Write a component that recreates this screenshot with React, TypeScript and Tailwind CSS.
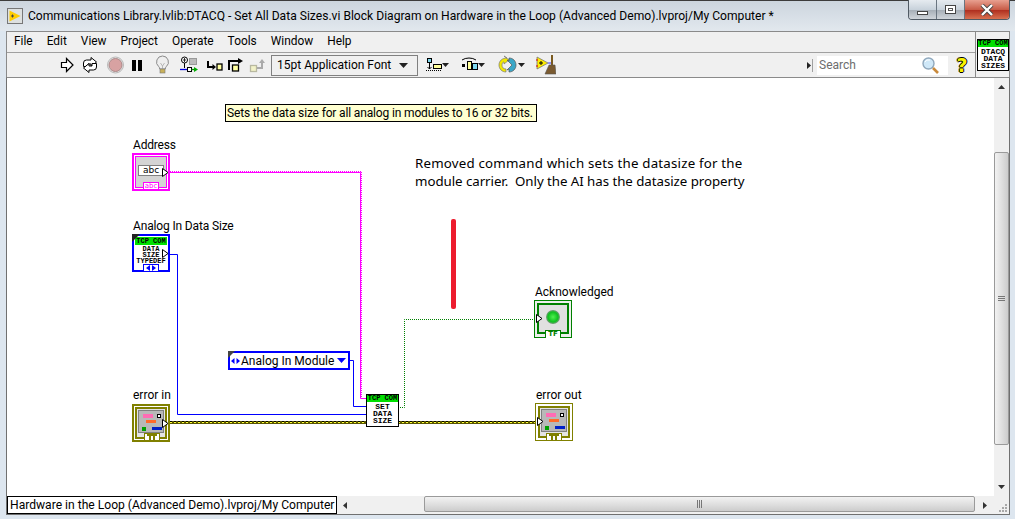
const FONT = "font-['Roboto','Noto_Sans',sans-serif]";
const TINY = "font-['Liberation_Mono',monospace] font-bold text-black";

function Icon({ w, children }: { w: number; children: React.ReactNode }) {
  return (
    <svg width={w} height={20} viewBox={`0 0 ${w} 20`} className="shrink-0">
      {children}
    </svg>
  );
}

function Caret({ x }: { x: number }) {
  return <path d={`M${x} 8h7l-3.500 4z`} fill="#222" />;
}

function Toolbar() {
  return (
    <div className="flex h-[24px] items-center">
      <div className="w-[53px] shrink-0" />
      <Icon w={14}>
        <path d="M1.500 7.500h5v-4l6.500 6.500-6.500 6.500v-4h-5z" fill="#fff" stroke="#000" strokeWidth="1.200" />
      </Icon>
      <div className="w-[8px] shrink-0" />
      <Icon w={16}>
        <path d="M1.500 11.500V8q0-3 3-3H9V2.500l5.500 4.500L9 11.500V9H6v2.500z" fill="#fff" stroke="#000" />
        <path d="M14.500 8.500V12q0 3-3 3H7v2.500L1.500 13 7 8.500V11h3V8.500z" fill="#fff" stroke="#000" />
      </Icon>
      <div className="w-[9px] shrink-0" />
      <Icon w={17}>
        <circle cx="8.500" cy="10" r="8" fill="#e8e8e8" stroke="#b8b8b8" />
        <circle cx="8.500" cy="10" r="6.500" fill="#d8a2a2" stroke="#a88" />
      </Icon>
      <div className="w-[8px] shrink-0" />
      <Icon w={11}>
        <rect x="0" y="5" width="4" height="11" fill="#000" />
        <rect x="6" y="5" width="4" height="11" fill="#000" />
      </Icon>
      <div className="w-[13px] shrink-0" />
      <Icon w={13}>
        <path d="M6.500 1a6 6 0 0 0-3.800 10.600c.8.800 1 1.400 1 2.400h5.600c0-1 .2-1.600 1-2.400A6 6 0 0 0 6.500 1z" fill="#eee" stroke="#8a8a8a" />
        <path d="M4.500 8l2 3 2-3M6.500 11v3" fill="none" stroke="#aaa" strokeWidth=".8" />
        <rect x="4" y="14" width="5" height="4" fill="#c9b15a" stroke="#777" strokeWidth=".6" />
      </Icon>
      <div className="w-[11px] shrink-0" />
      <Icon w={18}>
        <circle cx="4.500" cy="5" r="3" fill="#fff" stroke="#000" />
        <path d="M4.500 3v4M3 5h3" stroke="#000" strokeWidth=".8" />
        <path d="M4.500 8v5" stroke="#000" />
        <rect x="9.500" y="3.500" width="7" height="6" fill="#bbb" stroke="#999" />
        <path d="M0 14.500h7" stroke="#00d" strokeWidth="1.300" />
        <rect x="7.500" y="12.500" width="4" height="4" fill="#fff" stroke="#000" />
        <path d="M11.500 14.500h3" stroke="#080" strokeWidth="1.300" />
        <path d="M14 12l4 2.500-4 2.500z" fill="#0a0" />
      </Icon>
      <div className="w-[9px] shrink-0" />
      <Icon w={16}>
        <path d="M1 6v6h6" fill="none" stroke="#000" strokeWidth="2" />
        <path d="M5.500 9l3.500 3-3.500 3z" fill="#000" />
        <rect x="10" y="9" width="5" height="6" fill="#ffffa0" stroke="#000" strokeWidth="1.300" />
      </Icon>
      <div className="w-[5px] shrink-0" />
      <Icon w={16}>
        <path d="M1 15V6h9" fill="none" stroke="#000" strokeWidth="2" />
        <path d="M10 3l5 3-5 3z" fill="#000" />
        <rect x="4.500" y="10" width="6" height="6" fill="#ffffa0" stroke="#000" strokeWidth="1.300" />
      </Icon>
      <div className="w-[5px] shrink-0" />
      <Icon w={17}>
        <rect x="1.500" y="10.500" width="6" height="6" fill="#f2f2c8" stroke="#b8b8a0" strokeWidth="1.300" />
        <path d="M8 13h5V7" fill="none" stroke="#aaa" strokeWidth="2" />
        <path d="M10 8l3-4 3 4z" fill="#aaa" />
      </Icon>
      <div className="w-[5px] shrink-0" />
      <div className="flex h-[21px] w-[147px] shrink-0 items-center justify-between border border-[#808080] bg-[#f0f0f0] pl-[5px] pr-[9px] text-[12px] whitespace-nowrap text-black">
        <span>15pt Application Font</span>
        <svg width="9" height="5" viewBox="0 0 9 5"><path d="M0 0h9L4.500 5z" fill="#222" /></svg>
      </div>
      <div className="w-[8px] shrink-0" />
      <Icon w={23}>
        <rect x="1.500" y="3.500" width="4" height="4" fill="#7fd8ee" stroke="#000" />
        <path d="M3.500 8v6M1.500 12l2 2 2-2" fill="none" stroke="#000" />
        <path d="M0 15.500h15" stroke="#000" strokeDasharray="1 1" />
        <rect x="7.500" y="9.500" width="8" height="4" fill="#ffff9c" stroke="#000" />
        <Caret x={16} />
      </Icon>
      <div className="w-[12px] shrink-0" />
      <Icon w={24}>
        <path d="M1 5q3-2 7-2t7 2" fill="none" stroke="#000" />
        <rect x="1" y="9" width="3" height="3" fill="#000" />
        <rect x="6.500" y="6.500" width="4" height="8" fill="#ffff9c" stroke="#000" />
        <rect x="11.500" y="8.500" width="5" height="6" fill="#7fd8ee" stroke="#000" />
        <Caret x={17} />
      </Icon>
      <div className="w-[13px] shrink-0" />
      <Icon w={27}>
        <path d="M9 3C4 3 1 6 1 10s3 7 7 7v-3c-3 0-4-2-4-4s1-3 2-3v2l5-4-5-4z" fill="#f2e800" stroke="#777" strokeWidth=".7" />
        <path d="M11 3c4 0 7 3 7 7s-3 7-7 7v-3l-2 1 5-5-5-5 2 1z" fill="#3aa7c8" stroke="#555" strokeWidth=".7" />
        <Caret x={20} />
      </Icon>
      <div className="w-[11px] shrink-0" />
      <Icon w={20}>
        <path d="M1 2l11 6-11 6z" fill="#ffee00" stroke="#777" strokeWidth=".8" />
        <path d="M3 8h4M5 6v4" stroke="#000" />
        <path d="M0 5h2M0 11h2" stroke="#d00" />
        <path d="M12 8h4" stroke="#33f" />
        <path d="M16 0v10" stroke="#7a5a20" strokeWidth="2" />
        <path d="M9 19l4-9h6l1 9z" fill="#7a5a30" stroke="#555" strokeWidth=".6" />
      </Icon>
      <div className="flex-1" />
      <svg width="4" height="7" viewBox="0 0 4 7" className="mr-[1px] shrink-0"><path d="M0 0l4 3.500L0 7z" fill="#222" /></svg>
      <div className="mr-[4px] h-[13px] w-px shrink-0 bg-[#a0a0a0]" />
      <div className="flex h-[19px] w-[131px] shrink-0 items-center justify-between bg-white pl-[2px] pr-[8px] text-[12px] text-[#6d6d6d]">
        <span>Search</span>
        <svg width="18" height="17" viewBox="0 0 18 17">
          <circle cx="6.500" cy="6.500" r="5.500" fill="#cfe8f8" stroke="#90a8bc" strokeWidth="1.400" />
          <path d="M3 5q1-3 5-2" stroke="#fff" fill="none" />
          <path d="M11 11l5 5" stroke="#c98a3c" strokeWidth="2.600" />
        </svg>
      </div>
      <div className="w-[5px] shrink-0" />
      <span className="w-[18px] shrink-0 text-center font-['DejaVu_Sans',sans-serif] text-[19px] font-black leading-[20px] text-[#f7f300] [text-shadow:1px_0_0_#000,-1px_0_0_#000,0_1px_0_#000,0_-1px_0_#000]">?</span>
      <div className="w-[4px] shrink-0" />
    </div>
  );
}

function TinyLines({ lines, cls }: { lines: string[]; cls: string }) {
  return (
    <div className={`flex flex-col items-center ${TINY} ${cls}`}>
      {lines.map((l) => (
        <span key={l}>{l}</span>
      ))}
    </div>
  );
}

function Arrow({ left = false }: { left?: boolean }) {
  return (
    <svg width="7" height="9" viewBox="0 0 7 9" className={left ? "absolute left-[1px] top-[13px]" : "absolute right-[-1px] top-[13px]"}>
      <path d="M.5.5L6 4.500.5 8.500z" fill="#fff" stroke="#000" />
    </svg>
  );
}

function ErrorTerm({ cls, out = false }: { cls: string; out?: boolean }) {
  return (
    <div className={`absolute h-[38px] w-[38px] bg-white ${out ? "border border-[#808000] p-[2px]" : "border-2 border-[#808000] p-px"} ${cls}`}>
      <div className="relative h-full w-full border-2 border-[#808000] bg-[#e4e4e4] p-[1px]">
        <div className="relative h-[23px] w-full border border-[#808080] bg-[#b8b8b8]">
          <div className="absolute left-[4px] top-[3px] h-[4px] w-[10px] bg-[#ff6cb4]" />
          <div className="absolute left-[18px] top-[3px] h-[4px] w-[4px] border border-black bg-white" />
          <div className="absolute left-[7px] top-[9px] h-[3px] w-[10px] bg-[#ff6a2a]" />
          <div className="absolute left-[3px] top-[16px] h-[4px] w-[4px] bg-[#00a000]" />
          <div className="absolute left-[13px] top-[16px] h-[3px] w-[10px] bg-[#0020c8]" />
        </div>
      </div>
      <div className="absolute bottom-[-1px] left-[10px] flex h-[8px] w-[16px] items-center justify-center border border-[#808000] bg-white">
        <svg width="12" height="6" viewBox="0 0 12 6"><path d="M1 0h10v2H9v4H7V2H5v4H3V2H1z" fill="#808000" /></svg>
      </div>
      <Arrow left={out} />
    </div>
  );
}

function Label({ cls, children }: { cls: string; children: React.ReactNode }) {
  return <div className={`absolute whitespace-nowrap text-[12px] leading-[16px] text-black ${cls}`}>{children}</div>;
}

function Wires() {
  return (
    <svg width="987" height="420" viewBox="0 0 987 420" className="absolute left-0 top-0">
      <g transform="translate(-7 -78)" fill="none">
        <path d="M170 172.500H360.500V398.500H366" stroke="#ff00ff" />
        <path d="M170 171.500H361.500V398" stroke="#ff00ff" strokeDasharray="1 1" />
        <path d="M170 254.500H177.500V414.500H366" stroke="#0000ff" />
        <path d="M350 360.500H353.500V406.500H366" stroke="#0000ff" />
        <path d="M398 407.500H404.500V319.500H536" stroke="#008000" strokeDasharray="1 1" />
        <path d="M170 422.500H366M398 422.500H536" stroke="#5a5600" strokeWidth="3" />
        <path d="M170 422.500H366M398 422.500H536" stroke="#ffff30" strokeDasharray="2 2" />
        <path d="M170 421.500H366M398 421.500H536" stroke="#000" strokeDasharray="2 2" />
      </g>
    </svg>
  );
}

function Canvas() {
  return (
    <div className={`relative flex-1 bg-white ${FONT}`}>
      <Wires />
      <div className="absolute left-[218px] top-[26px] h-[18px] w-[312px] whitespace-nowrap border border-black bg-[#ffffd0] pl-[1px] text-[12px] leading-[16px] tracking-[-.15px] text-black">
        Sets the data size for all analog in modules to 16 or 32 bits.
      </div>
      <div className="absolute left-[408px] top-[76px] w-[350px] font-['Noto_Sans',sans-serif] text-[13.300px] leading-[18px] text-black">
        <div className="whitespace-nowrap tracking-[.2px]">Removed command which sets the datasize for the</div>
        <div className="whitespace-nowrap tracking-[-.05px]">module carrier.&nbsp; Only the AI has the datasize property</div>
      </div>
      <div className="absolute left-[444px] top-[141px] h-[90px] w-[5px] rounded-[2px] bg-[#ed1c2e]" />

      <Label cls="left-[126px] top-[59px] tracking-[-.2px]">Address</Label>
      <div className="absolute left-[125px] top-[75px] h-[38px] w-[38px] border-2 border-[#ff00ff] bg-white p-px">
        <div className="h-full w-full border border-[#ff00ff] bg-[#d4d4d4] pl-[2px] pt-[8px]">
          <div className="h-[11px] w-[26px] border border-[#808080] bg-white text-center font-['DejaVu_Sans',sans-serif] text-[9px] leading-[9px] text-black">abc</div>
        </div>
        <div className="absolute bottom-[-1px] left-[9px] h-[8px] w-[16px] border border-[#ff00ff] bg-white text-center font-['DejaVu_Sans',sans-serif] text-[7px] leading-[6px] text-[#ff00ff]">abc</div>
        <Arrow />
      </div>

      <Label cls="left-[126px] top-[140px] tracking-[-.15px]">Analog In Data Size</Label>
      <div className="absolute left-[125px] top-[156px] h-[38px] w-[38px] border-2 border-[#0000ff] bg-white p-px">
        <div className={`flex h-[8px] items-center justify-center bg-[#00e000] text-[7px] leading-[8px] ${TINY}`}>TCP COM</div>
        <TinyLines lines={["DATA", "SIZE", "TYPEDEF"]} cls="pt-px text-[7px] leading-[6px]" />
        <svg width="8" height="8" viewBox="0 0 8 8" className="absolute left-[-2px] top-[-2px]"><path d="M0 0h8L0 8z" fill="#222" /></svg>
        <div className="absolute bottom-[-2px] left-[9px] flex h-[8px] w-[16px] items-center justify-center border border-[#0000ff] bg-white">
          <svg width="10" height="6" viewBox="0 0 10 6"><path d="M4 0L0 3l4 3zM6 0l4 3-4 3z" fill="#0000ff" /></svg>
        </div>
        <Arrow />
      </div>

      <div className="absolute left-[221px] top-[273px] flex h-[19px] w-[122px] items-center border-2 border-[#0000ff] bg-white pl-px pr-[2px] text-[12px] leading-[16px] text-black">
        <svg width="9" height="6" viewBox="0 0 9 6" className="mr-[1px] shrink-0"><path d="M3.500 0L0 3l3.500 3zM5.500 0L9 3 5.500 6z" fill="#0000ff" /></svg>
        <span className="whitespace-nowrap">Analog In Module</span>
        <div className="flex-1" />
        <svg width="9" height="5" viewBox="0 0 9 5" className="shrink-0"><path d="M0 0h9L4.500 5z" fill="#0000ff" /></svg>
        <svg width="7" height="7" viewBox="0 0 7 7" className="absolute left-[-2px] top-[-2px]"><path d="M0 0h7L0 7z" fill="#444" /></svg>
      </div>

      <div className="absolute left-[359px] top-[316px] h-[33px] w-[33px] border border-black bg-white">
        <div className={`flex h-[7px] items-center justify-center bg-[#00e000] text-[7px] leading-[7px] ${TINY}`}>TCP COM</div>
        <TinyLines lines={["SET", "DATA", "SIZE"]} cls="pt-[1px] text-[8px] leading-[7px]" />
      </div>

      <Label cls="left-[528px] top-[206px]">Acknowledged</Label>
      <div className="absolute left-[527px] top-[222px] h-[38px] w-[38px] border border-[#008000] bg-[#eeeeee] p-[2px]">
        <div className="flex h-[31px] w-full items-center justify-center border-2 border-[#008000] bg-[#e0e0e0] pb-[4px]">
          <div className="h-[14px] w-[14px] rounded-full bg-[radial-gradient(circle,#50f050_0%,#10c020_50%,#909090_75%,#b0b0b0_100%)]" />
        </div>
        <div className="absolute bottom-[-1px] left-[10px] h-[8px] w-[16px] border-x border-t border-[#008000] bg-white text-center font-['DejaVu_Sans',sans-serif] text-[7px] font-bold leading-[7px] text-[#008000]">TF</div>
        <Arrow left />
      </div>

      <Label cls="left-[126px] top-[309px]">error in</Label>
      <ErrorTerm cls="left-[125px] top-[326px]" />
      <Label cls="left-[529px] top-[309px]">error out</Label>
      <ErrorTerm out cls="left-[528px] top-[325px]" />
    </div>
  );
}

export default function App() {
  return (
    <div className={`flex h-[519px] w-[1015px] flex-col overflow-hidden bg-[#dde6ef] ${FONT}`}>
      <div className="relative flex h-[31px] shrink-0 items-start border-t border-[#3c3c3c] bg-[linear-gradient(180deg,#ccd5de,#e2e8ee)] pl-[7px] pt-[7px]">
        <svg width="16" height="16" viewBox="0 0 16 16" className="mr-[5px] shrink-0">
          <rect x=".5" y=".5" width="15" height="15" fill="#dde0e0" stroke="#777" />
          <path d="M2.500 2.500l11 5.500-11 5.500z" fill="#ffcc00" />
          <path d="M4 8h3M5.500 6.500v3" stroke="#444" />
        </svg>
        <span className="whitespace-nowrap text-[12.100px] leading-[17px] text-black">
          Communications Library.lvlib:DTACQ - Set All Data Sizes.vi Block Diagram on Hardware in the Loop (Advanced Demo).lvproj/My Computer *
        </span>
        <div className="absolute right-[5px] top-[-1px] flex h-[20px] overflow-hidden rounded-b-[4px] border-x border-b border-[#505a64]">
          <div className="flex w-[28px] items-center justify-center border-r border-[#6a7580] bg-[linear-gradient(180deg,#e6ebf0,#c8d2db_50%,#a8b0b8_55%,#d0d5da)]">
            <div className="mt-[6px] h-[4px] w-[11px] border border-[#444] bg-white" />
          </div>
          <div className="flex w-[28px] items-center justify-center border-r border-[#6a7580] bg-[linear-gradient(180deg,#e6ebf0,#c8d2db_50%,#a8b0b8_55%,#d0d5da)]">
            <div className="flex h-[9px] w-[11px] items-center justify-center border border-[#444] bg-white"><div className="h-[3px] w-[5px] border border-[#555]" /></div>
          </div>
          <div className="flex w-[44px] items-center justify-center bg-[linear-gradient(180deg,#e8a090,#c85c48_50%,#b03020_55%,#d87050)]">
            <svg width="14" height="12" viewBox="0 0 14 12"><path d="M2 1l10 10M12 1L2 11" stroke="#444" strokeWidth="4" /><path d="M2 1l10 10M12 1L2 11" stroke="#fff" strokeWidth="2.400" /></svg>
          </div>
        </div>
      </div>

      <div className="ml-[6px] mr-[5px] flex h-[46px] shrink-0 border-x border-t border-[#8a8a8a] bg-[#f0f0f0]">
        <div className="flex min-w-0 flex-1 flex-col">
          <div className="flex h-[21px] items-center gap-[14px] border-b border-[#a0a0a0] pl-[7px] text-[11.900px] text-black">
            {["File", "Edit", "View", "Project", "Operate", "Tools", "Window", "Help"].map((m) => (
              <span key={m}>{m}</span>
            ))}
          </div>
          <Toolbar />
        </div>
        <div className="flex w-[34px] shrink-0 items-center border-l border-[#8a8a8a] pl-px">
          <div className="h-[32px] w-[32px] border border-black bg-white">
            <div className={`flex h-[7px] items-center justify-center bg-[#00e000] text-[7px] leading-[7px] ${TINY}`}>TCP COM</div>
            <TinyLines lines={["DTACQ", "DATA", "SIZES"]} cls="pt-[1px] text-[8px] leading-[7px]" />
          </div>
        </div>
      </div>

      <div className="ml-[6px] mr-[5px] flex h-[438px] shrink-0 flex-col border border-[#707070] border-t-[#8a8a8a]">
        <div className="flex min-h-0 flex-1">
          <Canvas />
          <div className="flex w-[15px] shrink-0 flex-col items-center bg-[#f0f0f0]">
            <div className="flex h-[18px] w-full items-center justify-center">
              <svg width="7" height="4" viewBox="0 0 7 4"><path d="M3.500 0L7 4H0z" fill="#333" /></svg>
            </div>
            <div className="h-[56px] shrink-0" />
            <div className="relative h-[293px] w-full shrink-0 rounded-[2px] border border-[#9a9a9a] bg-[linear-gradient(90deg,#f2f2f2,#e0e0e0_50%,#cccccc)]">
              <div className="absolute left-[3px] right-[3px] top-[143px] flex flex-col gap-px">
                <div className="h-px bg-[#777]" /><div className="h-px bg-[#777]" /><div className="h-px bg-[#777]" />
              </div>
            </div>
            <div className="flex-1" />
            <div className="flex h-[18px] w-full items-center justify-center">
              <svg width="7" height="4" viewBox="0 0 7 4"><path d="M0 0h7L3.500 4z" fill="#333" /></svg>
            </div>
          </div>
        </div>
        <div className="flex h-[18px] shrink-0 bg-[#f0f0f0]">
          <div className="flex h-full w-[330px] shrink-0 items-center overflow-hidden whitespace-nowrap border border-black bg-white pl-[2px] pt-px text-[12.100px] text-black">
            Hardware in the Loop (Advanced Demo).lvproj/My Computer
          </div>
          <div className="flex w-[16px] shrink-0 items-center justify-center">
            <svg width="4" height="7" viewBox="0 0 4 7"><path d="M4 0v7L0 3.500z" fill="#333" /></svg>
          </div>
          <div className="w-[71px] shrink-0" />
          <div className="relative h-[16px] w-[551px] shrink-0 rounded-[2px] border border-[#9a9a9a] bg-[linear-gradient(180deg,#f2f2f2,#e0e0e0_50%,#cccccc)]">
            <div className="absolute bottom-[3px] left-[272px] top-[3px] flex gap-px">
              <div className="w-px bg-[#777]" /><div className="w-px bg-[#777]" /><div className="w-px bg-[#777]" />
            </div>
          </div>
          <div className="flex flex-1 items-center justify-center">
            <svg width="4" height="7" viewBox="0 0 4 7"><path d="M0 0v7l4-3.500z" fill="#333" /></svg>
          </div>
          <div className="flex w-[15px] shrink-0 items-end justify-end pb-px pr-px">
            <svg width="10" height="10" viewBox="0 0 10 10" fill="#a8a8a8"><rect x="7" y="1" width="2" height="2" /><rect x="4" y="4" width="2" height="2" /><rect x="7" y="4" width="2" height="2" /><rect x="1" y="7" width="2" height="2" /><rect x="4" y="7" width="2" height="2" /><rect x="7" y="7" width="2" height="2" /></svg>
          </div>
        </div>
      </div>
    </div>
  );
}
